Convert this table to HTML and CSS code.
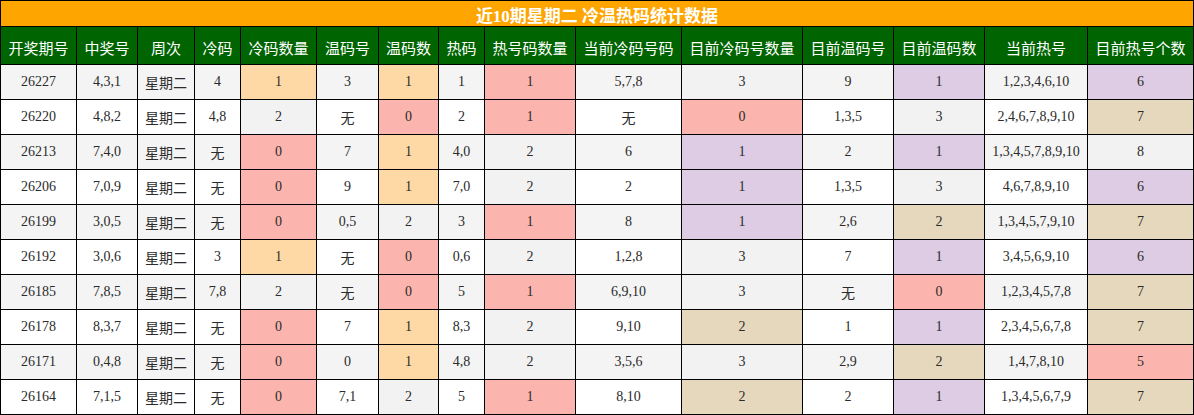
FILE: index.html
```html
<!DOCTYPE html>
<html lang="zh">
<head>
<meta charset="utf-8">
<title>近10期星期二 冷温热码统计数据</title>
<link rel="stylesheet" href="styles.css">
</head>
<body>
<div class="table">
  <div class="title">近10期星期二 冷温热码统计数据</div>
  <div class="head">
    <div class="th">开奖期号</div><div class="th">中奖号</div><div class="th">周次</div><div class="th">冷码</div><div class="th">冷码数量</div><div class="th">温码号</div><div class="th">温码数</div><div class="th">热码</div><div class="th">热号码数量</div><div class="th">当前冷码号码</div><div class="th">目前冷码号数量</div><div class="th">目前温码号</div><div class="th">目前温码数</div><div class="th">当前热号</div><div class="th">目前热号个数</div>
  </div>
  <div class="body">
    <div class="row">
      <div class="td">26227</div><div class="td">4,3,1</div><div class="td">星期二</div><div class="td">4</div><div class="td peach">1</div><div class="td">3</div><div class="td peach">1</div><div class="td">1</div><div class="td pink">1</div><div class="td">5,7,8</div><div class="td gray">3</div><div class="td">9</div><div class="td lav">1</div><div class="td">1,2,3,4,6,10</div><div class="td lav">6</div>
    </div>
    <div class="row">
      <div class="td">26220</div><div class="td">4,8,2</div><div class="td">星期二</div><div class="td">4,8</div><div class="td gray">2</div><div class="td">无</div><div class="td pink">0</div><div class="td">2</div><div class="td pink">1</div><div class="td">无</div><div class="td pink">0</div><div class="td">1,3,5</div><div class="td gray">3</div><div class="td">2,4,6,7,8,9,10</div><div class="td beige">7</div>
    </div>
    <div class="row">
      <div class="td">26213</div><div class="td">7,4,0</div><div class="td">星期二</div><div class="td">无</div><div class="td pink">0</div><div class="td">7</div><div class="td peach">1</div><div class="td">4,0</div><div class="td gray">2</div><div class="td">6</div><div class="td lav">1</div><div class="td">2</div><div class="td lav">1</div><div class="td">1,3,4,5,7,8,9,10</div><div class="td gray">8</div>
    </div>
    <div class="row">
      <div class="td">26206</div><div class="td">7,0,9</div><div class="td">星期二</div><div class="td">无</div><div class="td pink">0</div><div class="td">9</div><div class="td peach">1</div><div class="td">7,0</div><div class="td gray">2</div><div class="td">2</div><div class="td lav">1</div><div class="td">1,3,5</div><div class="td gray">3</div><div class="td">4,6,7,8,9,10</div><div class="td lav">6</div>
    </div>
    <div class="row">
      <div class="td">26199</div><div class="td">3,0,5</div><div class="td">星期二</div><div class="td">无</div><div class="td pink">0</div><div class="td">0,5</div><div class="td gray">2</div><div class="td">3</div><div class="td pink">1</div><div class="td">8</div><div class="td lav">1</div><div class="td">2,6</div><div class="td beige">2</div><div class="td">1,3,4,5,7,9,10</div><div class="td beige">7</div>
    </div>
    <div class="row">
      <div class="td">26192</div><div class="td">3,0,6</div><div class="td">星期二</div><div class="td">3</div><div class="td peach">1</div><div class="td">无</div><div class="td pink">0</div><div class="td">0,6</div><div class="td gray">2</div><div class="td">1,2,8</div><div class="td gray">3</div><div class="td">7</div><div class="td lav">1</div><div class="td">3,4,5,6,9,10</div><div class="td lav">6</div>
    </div>
    <div class="row">
      <div class="td">26185</div><div class="td">7,8,5</div><div class="td">星期二</div><div class="td">7,8</div><div class="td gray">2</div><div class="td">无</div><div class="td pink">0</div><div class="td">5</div><div class="td pink">1</div><div class="td">6,9,10</div><div class="td gray">3</div><div class="td">无</div><div class="td pink">0</div><div class="td">1,2,3,4,5,7,8</div><div class="td beige">7</div>
    </div>
    <div class="row">
      <div class="td">26178</div><div class="td">8,3,7</div><div class="td">星期二</div><div class="td">无</div><div class="td pink">0</div><div class="td">7</div><div class="td peach">1</div><div class="td">8,3</div><div class="td gray">2</div><div class="td">9,10</div><div class="td beige">2</div><div class="td">1</div><div class="td lav">1</div><div class="td">2,3,4,5,6,7,8</div><div class="td beige">7</div>
    </div>
    <div class="row">
      <div class="td">26171</div><div class="td">0,4,8</div><div class="td">星期二</div><div class="td">无</div><div class="td pink">0</div><div class="td">0</div><div class="td peach">1</div><div class="td">4,8</div><div class="td gray">2</div><div class="td">3,5,6</div><div class="td gray">3</div><div class="td">2,9</div><div class="td beige">2</div><div class="td">1,4,7,8,10</div><div class="td pink">5</div>
    </div>
    <div class="row">
      <div class="td">26164</div><div class="td">7,1,5</div><div class="td">星期二</div><div class="td">无</div><div class="td pink">0</div><div class="td">7,1</div><div class="td gray">2</div><div class="td">5</div><div class="td pink">1</div><div class="td">8,10</div><div class="td beige">2</div><div class="td">2</div><div class="td lav">1</div><div class="td">1,3,4,5,6,7,9</div><div class="td beige">7</div>
    </div>
  </div>
</div>
</body>
</html>
```
FILE: styles.css
```css
html, body {
  margin: 0;
  padding: 0;
  background: #ffffff;
}

.table {
  width: 1194px;
  box-sizing: border-box;
  display: grid;
  grid-template-columns: 75px 60px 56px 45px 75px 61px 59px 45px 90px 105px 120px 90px 90px 102px 105px;
  grid-template-rows: 25px 37px;
  grid-auto-rows: 34px;
  gap: 1px;
  padding: 1px;
  background: #000000;
}

.head, .body, .row {
  display: contents;
}

.title {
  grid-column: 1 / -1;
  background: #ffa500;
  color: #ffffff;
  font-family: "Liberation Serif", "Noto Sans CJK SC", serif;
  font-weight: bold;
  font-size: 17px;
  display: flex;
  align-items: center;
  justify-content: center;
  padding-top: 1px;
  box-sizing: border-box;
  white-space: nowrap;
}

.th {
  background: #006400;
  color: #ffffff;
  font-family: "Noto Sans CJK SC", "Noto Sans", sans-serif;
  font-size: 15px;
  display: flex;
  align-items: center;
  justify-content: center;
  padding-top: 3px;
  box-sizing: border-box;
  white-space: nowrap;
}

.td {
  background: #ffffff;
  color: #2b2b2b;
  font-family: "Liberation Serif", "Noto Sans CJK SC", serif;
  font-size: 14px;
  display: flex;
  align-items: center;
  justify-content: center;
  white-space: nowrap;
}

.row:nth-child(odd) .td {
  background: #f4f4f4;
}

.row .td.peach { background: #fed9a6; }
.row .td.pink { background: #fbb4ae; }
.row .td.lav { background: #decbe4; }
.row .td.beige { background: #e5d8bd; }
.row .td.gray { background: #f2f2f2; }
```
